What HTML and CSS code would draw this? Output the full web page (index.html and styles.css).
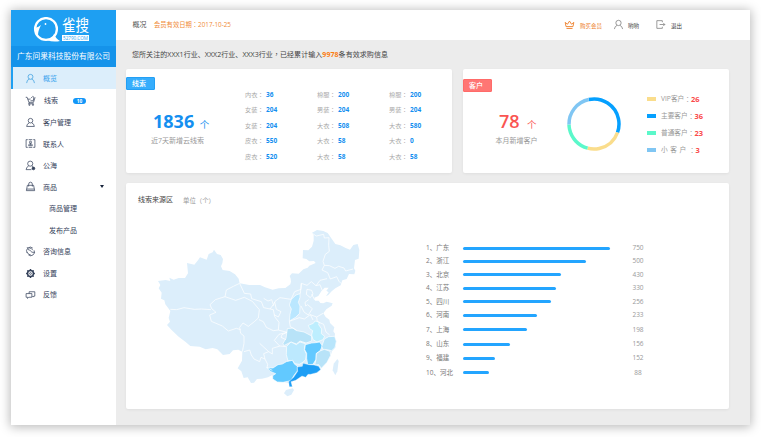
FILE: index.html
```html
<!DOCTYPE html>
<html lang="zh-CN">
<head>
<meta charset="utf-8">
<title>雀搜</title>
<link rel="stylesheet" href="styles.css">
</head>
<body>
<div class="app">
  <aside class="side">
    <div class="brand">
      <svg class="bird" viewBox="0 0 27 25"><circle cx="13" cy="12" r="10.900" fill="none" stroke="#fff" stroke-width="2.300"/><path d="M14 23Q20 21 21 17Q23 22 27 24Q20 25.500 14 23Z" fill="#fff"/><path d="M2 11Q6 10 8 8Q5 14 5 18Q2 15 2 11Z" fill="#fff"/><circle cx="12.500" cy="7" r=".9" fill="#fff"/></svg>
      <div class="wordmark"><span class="word">雀搜</span><span class="domain">52790.COM</span></div>
    </div>
    <div class="company">广东问果科技股份有限公司</div>
    <nav class="nav">
      <a class="item active"><svg viewBox="0 0 12 12"><circle cx="6" cy="4.200" r="2.700"/><path d="M1.800 11Q2 7.200 4.800 6.600M7.200 6.600Q10 7.200 10.300 11"/></svg><span>概览</span></a>
      <a class="item gap"><svg viewBox="0 0 12 12"><path d="M.8 2.500H2.300L4.300 8H9.300L11 2.500M3.200 4.500H6M4.500 8L4 9.500H9.500M6 6.300H9L9.700 2.500L8.500 1.500L6.500 3.500"/><circle cx="4.800" cy="10.700" r=".7"/><circle cx="8.700" cy="10.700" r=".7"/></svg><span>线索</span><b class="badge">10</b></a>
      <a class="item"><svg viewBox="0 0 12 12"><circle cx="6" cy="4" r="2.500"/><path d="M4.500 6.500Q2 7.500 1.800 10.300H10.200Q10 7.500 7.500 6.500"/></svg><span>客户管理</span></a>
      <a class="item"><svg viewBox="0 0 12 12"><path d="M3 1.800H1.200V10.200H3M9 1.800H10.800V10.200H9M4 1.800H8M4 10.200H8"/><circle cx="6" cy="4.500" r="1.100"/><path d="M4 8.400Q4 6 6 6Q8 6 8 8.400ZM6 6V8"/></svg><span>联系人</span></a>
      <a class="item"><svg viewBox="0 0 12 12"><circle cx="5.700" cy="4" r="2.800"/><path d="M4 6.500Q1.500 7.500 1.200 10.500H7M7.500 6.500L8.700 7.300"/><circle cx="9.200" cy="9.200" r="1.500" fill="#34415a"/></svg><span>公海</span></a>
      <a class="item"><svg viewBox="0 0 12 12"><path d="M2.600 4.700H9.400L10.500 10.500H1.500ZM4 6V3.500Q4 1.300 6 1.300Q8 1.300 8 3.500V6M1.900 8.800H10.200"/></svg><span>商品</span><i class="caret"></i></a>
      <a class="item sub"><span>商品管理</span></a>
      <a class="item sub"><span>发布产品</span></a>
      <a class="item"><svg viewBox="0 0 12 12"><path d="M2.300 7.500A4.100 4.100 0 0 1 8.500 2.300M4 2.200L2 1.800M10 4.800A4.100 4.100 0 0 1 3.700 9.700M3 4Q5 3.500 6 5.500Q7 7.300 10.400 7M4.500 2Q7 2 8.500 4.500M2 6.500Q3.500 9.500 6.500 10"/></svg><span>咨询信息</span></a>
      <a class="item"><svg viewBox="0 0 12 12"><circle cx="6" cy="6" r="3.200" stroke-width="1.600"/><circle cx="6" cy="6" r="1"/><path stroke-width="1.500" d="M6 1.200V2.500M6 9.500V10.800M1.200 6H2.500M9.500 6H10.800M2.600 2.600L3.500 3.500M8.500 8.500L9.400 9.400M2.600 9.400L3.500 8.500M8.500 3.500L9.400 2.600"/></svg><span>设置</span></a>
      <a class="item"><svg viewBox="0 0 12 12"><path d="M4.500 5V3H10.700V7.800H9.500L9 8.800L8 7.800M1.200 5H7.500V9H4L2.800 10.300V9H1.200Z"/></svg><span>反馈</span></a>
    </nav>
  </aside>

  <div class="main">
    <header class="top">
      <h1>概况</h1><span class="expiry">会员有效日期<u>：</u>2017-10-25</span>
      <div class="actions">
        <a class="vip"><svg viewBox="0 0 12 12"><path d="M2.200 8.300L1.300 3.700L3.800 5.700L6 2.300L8.200 5.700L10.700 3.700L9.800 8.300ZM2.700 10.300H9.300"/></svg><span>购买会员</span></a>
        <a class="user"><svg viewBox="0 0 12 12"><circle cx="6" cy="4.300" r="2.900"/><path d="M1.500 11Q2 7.800 4.500 6.900M7.500 6.900Q10 7.800 10.500 11"/></svg><span>哟哟</span></a>
        <a class="exit"><svg viewBox="0 0 12 12"><path d="M8 3.500V1.800H2V10.200H8V8.500M5 6H10.700M9 4.300L10.700 6L9 7.700"/></svg><span>退出</span></a>
      </div>
    </header>
    <p class="notice">您所关注的XXX1行业、XXX2行业、XXX3行业<u>，</u>已经累计输入<b>9978</b>条有效求购信息</p>

    <div class="cards">
      <section class="card leads">
        <h2 class="tag">线索</h2>
        <div class="total"><p class="figure"><b>1836</b><span>个</span></p><p class="caption">近7天新增云线索</p></div>
        <dl class="stats">
          <div><dt>内衣<u>：</u></dt><dd>36</dd></div><div><dt>棉服<u>：</u></dt><dd>200</dd></div><div><dt>棉服<u>：</u></dt><dd>200</dd></div>
          <div><dt>女装<u>：</u></dt><dd>204</dd></div><div><dt>男装<u>：</u></dt><dd>204</dd></div><div><dt>男装<u>：</u></dt><dd>204</dd></div>
          <div><dt>女装<u>：</u></dt><dd>204</dd></div><div><dt>大衣<u>：</u></dt><dd>508</dd></div><div><dt>大衣<u>：</u></dt><dd>580</dd></div>
          <div><dt>皮衣<u>：</u></dt><dd>550</dd></div><div><dt>大衣<u>：</u></dt><dd>58</dd></div><div><dt>大衣<u>：</u></dt><dd>0</dd></div>
          <div><dt>皮衣<u>：</u></dt><dd>520</dd></div><div><dt>大衣<u>：</u></dt><dd>58</dd></div><div><dt>大衣<u>：</u></dt><dd>58</dd></div>
        </dl>
      </section>
      <section class="card clients">
        <h2 class="tag red">客户</h2>
        <div class="total"><p class="figure"><b>78</b><span>个</span></p><p class="caption">本月新增客户</p></div>
        <svg class="donut" viewBox="0 0 54 54"><g fill="none" stroke-width="3.500" transform="rotate(-102 27 27)">
          <circle cx="27" cy="27" r="25" pathLength="360" stroke="#05a0ff" stroke-dasharray="122 238"/>
          <circle cx="27" cy="27" r="25" pathLength="360" stroke="#fadd8c" stroke-dasharray="85 275" stroke-dashoffset="-122"/>
          <circle cx="27" cy="27" r="25" pathLength="360" stroke="#5bf8ca" stroke-dasharray="74 286" stroke-dashoffset="-207"/>
          <circle cx="27" cy="27" r="25" pathLength="360" stroke="#80c6f3" stroke-dasharray="79 281" stroke-dashoffset="-281"/></g></svg>
        <ul class="legend">
          <li><i class="c1"></i>VIP客户<u>：</u><b>26</b></li>
          <li><i class="c2"></i>主要客户<u>：</u><b>36</b></li>
          <li><i class="c3"></i>普通客户<u>：</u><b>23</b></li>
          <li class="wide"><i class="c4"></i>小 客 户 <u>：</u><b>3</b></li>
        </ul>
      </section>
    </div>

    <section class="card source">
      <div class="heading"><h3>线索来源区</h3><span>单位（个）</span></div>
      <div class="charts">
        <svg class="map" viewBox="0 0 675 555">
          <g fill="#dceefb">
            <path d="M39 183L62 180L76 183L73 173L86 179L101 174L120 174L129 160L126 129L148 134L160 119L165 112L185 119L191 102L203 97L207 89L216 102L227 105L234 117L232 130L228 139L233 150L254 153L270 163L281 176L284 190L313 195L345 195L360 202L383 209L401 205L421 204L436 193L438 185L437 176L434 168L441 160L461 161L475 148L488 143L493 137L512 129L507 123L493 124L484 117L473 115L474 90L490 91L501 80L506 62L506 45L500 39L516 30L535 33L548 39L559 55L571 72L586 76L602 84L615 89L625 75L638 72L643 90L641 116L630 120L627 145L631 152L628 163L612 162L605 177L592 181L587 196L571 205L560 214L549 226L543 228L551 217L544 212L551 203L539 203L529 214L520 228L508 233L510 242L521 242L526 249L535 250L545 245L563 250L560 257L544 268L535 280L542 291L553 299L555 309L568 322L565 334L570 341L569 350L574 363L572 382L561 394L556 410L545 428L533 441L526 448L517 458L499 463L487 465L482 472L470 469L452 480L438 486L441 499L435 500L431 489L414 486L398 487L387 479L382 465L369 472L351 476L336 477L327 488L318 489L308 472L296 474L289 454L278 445L291 422L292 395L280 389L264 391L254 402L234 405L217 388L203 384L182 388L164 380L136 378L121 365L101 350L79 329L66 315L75 305L71 294L76 273L70 265L61 253L58 241L48 236L50 218L41 205L46 195Z"/>
            <path d="M423 510L443 505L447 510L439 524L427 529L417 520Z"/><path d="M577 417L581 423L577 454L571 466L563 451L566 431Z"/>
          </g>
          <g stroke="#fff" stroke-width="2">
            <path fill="#bae7ff" d="M439 238L453 225L465 221L465 232L460 247L465 258L464 280L452 292L433 303L435 283L439 267L433 255Z"/>
            <path fill="#b8e3f8" d="M427 326L444 324L455 332L477 336L500 348L500 363L483 369L465 363L454 372L438 366L416 377L414 370L423 355Z"/>
            <path fill="#bdeefe" d="M490 316L505 310L510 303L523 306L521 314L530 327L529 341L539 349L534 359L516 366L504 359L500 345L503 332L494 326Z"/>
            <path fill="#bce9fe" d="M425 379L438 366L454 374L465 366L481 371L478 389L484 402L482 418L475 426L463 433L449 431L443 421L429 423L424 404Z"/>
            <path fill="#62c9ff" d="M481 374L500 369L512 368L524 366L532 378L525 393L514 400L513 418L504 433L488 434L485 415L485 400L479 389Z"/>
            <path fill="#b8e5fb" d="M538 357L551 350L569 349L574 364L570 383L560 392L545 389L535 389L530 380Z"/>
            <path fill="#b8e3f8" d="M525 393L538 388L555 394L557 406L546 427L529 445L521 434L509 435L513 419L514 401Z"/>
            <path fill="#62c9ff" d="M365 443L384 444L399 434L412 432L424 425L442 421L449 433L457 438L457 453L447 466L438 482L414 487L397 486L383 477L383 467L392 461L378 455Z"/>
            <path fill="#1e9ef5" stroke-width="1" d="M457 441L472 439L474 430L492 434L507 435L521 439L527 449L515 458L497 463L489 463L482 472L471 468L452 481L438 485L442 500L433 500L431 485L446 472L458 454Z"/>
          </g>
          <g fill="none" stroke="#fff" stroke-width="2.200" stroke-linejoin="round">
            <path d="M76 268L95 269L117 263L148 268L169 267L198 269M284 190L265 199L244 210L240 230L211 239L195 254L200 266L213 277L194 285L199 304L232 318L250 333L274 325L287 329M240 230L272 241L298 232L322 244L343 269L340 294L328 305L310 319L294 309L284 322L287 340L297 348L297 370L292 395M284 190L298 220L317 222L320 236L349 245L356 263L385 269L389 290L402 307L400 330L385 332L364 322L355 305L342 299M356 235L369 243L380 239L385 254L375 267M384 258L390 244L405 233L438 238M389 246L394 268L408 275L400 291L387 284M438 238L449 215L468 208L469 190L486 196L499 185L513 197L525 194L532 212M469 190L466 221M486 208L500 211L504 222L496 233L484 223ZM500 222L509 240M468 258L477 276L490 285L502 266L488 254L482 258L480 247L491 239M534 280L515 291L496 284L478 297L463 293L433 304L436 320L455 331M515 291L517 305L536 313L543 336L554 345M496 284L504 300M400 330L426 337L411 344L408 352L423 359M297 395L314 390L319 405L327 417L344 425L348 412L360 417L356 401L371 395L382 402L382 385L405 378L423 380M344 370L371 395M360 417L368 433L366 443L382 451M404 378L388 361L402 343L426 337M500 39L514 48L536 43L538 54L552 53L551 76L553 94L541 103L534 124L538 136L553 137L570 145L581 139L597 144L602 153L624 147M538 136L531 150L548 158L556 177L575 170L582 184L589 191M513 197L525 181L546 176"/>
          </g>
        </svg>
        <ol class="bars">
          <li><span>1、广东</span><i style="width:146.500px"></i><b>750</b></li>
          <li><span>2、浙江</span><i style="width:123px"></i><b>500</b></li>
          <li><span>3、北京</span><i style="width:98px"></i><b>430</b></li>
          <li><span>4、江苏</span><i style="width:93px"></i><b>330</b></li>
          <li><span>5、四川</span><i style="width:87.500px"></i><b>256</b></li>
          <li><span>6、河南</span><i style="width:73.500px"></i><b>233</b></li>
          <li><span>7、上海</span><i style="width:64px"></i><b>198</b></li>
          <li><span>8、山东</span><i style="width:46.500px"></i><b>156</b></li>
          <li><span>9、福建</span><i style="width:32px"></i><b>152</b></li>
          <li><span>10、河北</span><i style="width:26px"></i><b>88</b></li>
        </ol>
      </div>
    </section>
  </div>
</div>
</body>
</html>
```
FILE: styles.css
```css
* { box-sizing: border-box; margin: 0; padding: 0; }
body { height: 437px; padding: 10px 0 0 11px; background: #fff; overflow: hidden; font-family: "Open Sans", "Noto Sans CJK SC", sans-serif; font-size: 7px; line-height: 10px; color: #555; white-space: nowrap; }
ul, ol { list-style: none; }
i { font-style: normal; }
u { text-decoration: none; font-family: "Noto Sans CJK TC", sans-serif; font-feature-settings: "locl" 0; line-height: 1; }
svg { display: block; flex: none; }

.app { display: flex; width: 739px; height: 415px; background: #ececec; box-shadow: 0 1px 10px 1px rgba(0, 0, 0, .28); }

/* Sidebar */
.side { width: 105px; background: #fff; flex: none; }
.brand { height: 36px; background: #1e9ff2; display: flex; padding: 7px 0 0 22px; color: #fff; gap: 2px; }
.bird { width: 27px; height: 25px; }
.wordmark { width: 27px; display: flex; flex-direction: column; }
.word { font-size: 13.5px; line-height: 17px; height: 17px; transform: scaleY(1.22); }
.domain { background: #fff; color: #1e9ff2; font-size: 4.6px; line-height: 6px; height: 6px; margin-top: 1px; text-align: center; }
.company { height: 21px; background: #1593ea; color: #fff; font-size: 7.75px; line-height: 20px; text-align: center; }
.item { display: flex; align-items: center; height: 21.55px; padding-left: 14px; color: #34415a; }
.item span { padding-top: 1.4px; }
.item svg { width: 11px; height: 11px; margin-right: 7px; fill: none; stroke: #34415a; stroke-width: .8; }
.item.active { height: 22px; background: #dceefb; border-left: 2px solid #1e9ff2; padding-left: 12px; color: #3aa4ee; }
.item.active svg { stroke: #3a9de0; }
.item.gap { margin-top: 1px; }
.item.gap svg { margin-right: 8px; }
.item.sub { padding-left: 38px; }
.badge { width: 13px; height: 6px; margin: 1px 0 0 15px; border-radius: 3px; background: #1296f8; color: #fff; font-size: 4.8px; line-height: 6px; text-align: center; }
.caret { margin-left: 43px; border: 2px solid transparent; border-top: 3px solid #17233b; border-bottom: 0; }

/* Top bar */
.main { flex: 1; min-width: 0; }
.top { height: 30px; background: #fff; display: flex; align-items: center; padding-left: 16.5px; }
h1 { font-size: 7px; font-weight: 400; width: 21.5px; }
.expiry { font-size: 6.3px; color: #f08a35; }
.actions { display: flex; margin-left: auto; padding-right: 68px; font-size: 5.5px; color: #444; }
.actions a { display: flex; align-items: center; }
.actions span { padding-top: 1.4px; }
.actions svg { width: 11px; height: 11px; fill: none; stroke: #777; stroke-width: .8; }
.actions .vip { color: #ee802b; gap: 5px; margin-right: 11px; }
.actions .vip svg { stroke: #ee802b; stroke-width: 1; }
.user { gap: 4px; margin-right: 16px; }
.exit { gap: 5px; }
.notice { padding: 9.5px 0 0 16px; height: 29px; color: #444; letter-spacing: .06px; }
.notice b { color: #fb7d12; }

/* Cards */
.cards { display: flex; gap: 11px; padding-left: 10px; }
.card { background: #fff; border-radius: 2px; box-shadow: 0 1px 3px rgba(0, 0, 0, .06); }
.leads, .clients { height: 104px; display: flex; }
.leads { width: 326px; }
.clients { width: 266px; }
.tag { flex: none; width: 29px; height: 13px; margin-top: 8px; border-radius: 1px; background: #36adfc; border: 1px solid #239ff4; color: #fff; font-size: 7px; font-weight: 500; line-height: 12px; padding-left: 5px; }
.tag.red { margin-top: 10px; background: #ff7674; border-color: #ff6b69; }
.total { flex: none; padding-top: 41px; }
.leads .total { width: 90px; margin-left: -5px; color: #148ff0; }
.leads .caption { padding-left: 1px; }
.figure { display: flex; align-items: center; height: 23px; }
.figure b { font-size: 18px; line-height: 23px; }
.leads .figure { padding-left: 3px; gap: 5.5px; }
.figure span { font-size: 9.5px; padding-top: 6px; }
.caption { color: #999; margin-top: 2.5px; }
.stats { flex: none; display: grid; grid-template-columns: repeat(3, 72px); grid-template-rows: repeat(5, 15.5px); padding-top: 18px; margin-left: 5px; font-size: 6.5px; }
.stats div { display: flex; align-items: center; height: 15px; }
.stats dt { width: 21px; color: #aaa; font-size: 6.2px; }
.stats dd { color: #148ff0; font-weight: 700; }
.clients .total { width: 68px; margin-left: 3px; color: #fa5552; }
.clients .figure { padding-left: 4px; gap: 7.5px; }
.clients .figure b { font-weight: 600; }
.clients .caption { padding-left: .5px; }
.donut { width: 54px; height: 54px; margin: 28px 0 0 4px; }
.legend { flex: none; margin: 22px 0 0 26px; font-size: 6.7px; color: #999; }
.legend li { display: flex; align-items: center; height: 16.9px; }
.legend li.wide { word-spacing: .8px; white-space: pre; }
.legend i { width: 9px; height: 4px; margin-right: 5px; }
.legend b { color: #fa4a4a; font-size: 7.5px; }
.c1 { background: #fadd8c; }
.c2 { background: #05a0ff; }
.c3 { background: #5bf8ca; }
.c4 { background: #80c6f3; }

/* Lead sources */
.source { width: 603px; height: 226px; margin: 10px 0 0 10px; }
.heading { display: flex; padding: 12px 0 0 12px; height: 37px; }
h3 { font-size: 7px; font-weight: 400; width: 45px; color: #444; }
.heading span { font-size: 6.4px; color: #999; padding-top: .5px; }
.charts { display: flex; padding-left: 19px; }
.map { width: 225px; height: 185px; }
.bars { margin: 21.8px 0 0 56px; width: 225px; display: grid; grid-template-rows: 13px 13.7px 13.3px 13.7px 13.5px 14.5px 14.3px 14px 14.7px 13px; font-size: 6.5px; color: #777; }
.bars li { display: flex; align-items: center; height: 13px; }
.bars span { width: 37px; }
.bars i { height: 3px; border-radius: 1.5px; background: #23a5ff; }
.bars b { margin-left: auto; width: 26px; text-align: center; font-weight: 400; color: #999; }
```
